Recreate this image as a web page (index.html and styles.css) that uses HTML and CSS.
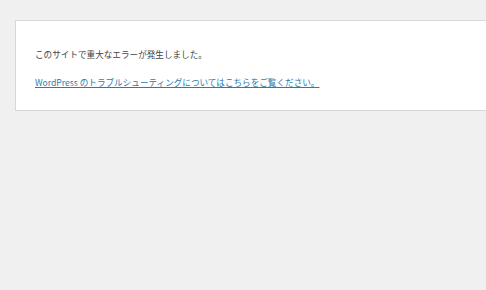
FILE: index.html
```html
<!DOCTYPE html>
<html lang="ja">
<head>
  <meta charset="UTF-8" />
  <meta name="viewport" content="width=device-width, initial-scale=1.0"/>
  <title>WordPress &rsaquo; エラー</title>
  <link rel="stylesheet" href="styles.css">
</head>
<body>
  <div class="error-page">
    <p class="message">このサイトで重大なエラーが発生しました。</p>
    <p class="message"><a href="#">WordPress のトラブルシューティングについてはこちらをご覧ください。</a></p>
  </div>
</body>
</html>
```

FILE: styles.css
```css
html {
  background: #f0f0f0;
}

body {
  margin: 0;
  padding-top: 20px;
  font-family: "Noto Sans CJK JP", "Liberation Sans", sans-serif;
  color: #444;
}

.error-page {
  background: #fff;
  border: 1px solid #d8d8d8;
  border-right: none;
  margin-left: 15px;
  padding: 26px 20px 21px 19px;
}

.message {
  margin: 0;
  font-size: 8.6px;
  line-height: 14px;
}

.message + .message {
  margin-top: 14px;
}

.message a {
  color: #2a7bb0;
  text-decoration: underline;
}
```
